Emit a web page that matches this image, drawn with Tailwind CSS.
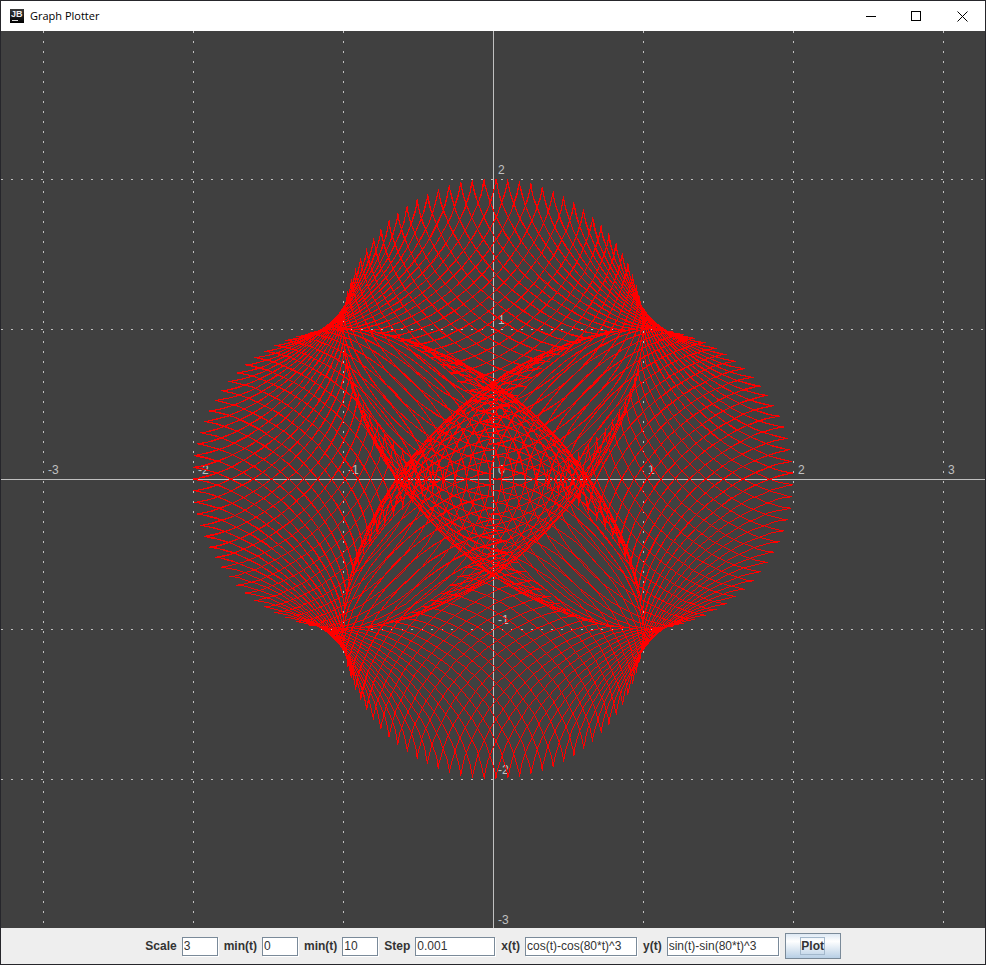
<!DOCTYPE html>
<html lang="en">
<head>
<meta charset="utf-8">
<meta name="viewport" content="width=device-width, initial-scale=1">
<title>Graph Plotter</title>
<script src="https://cdn.jsdelivr.net/npm/@tailwindcss/browser@4"></script>
</head>
<body class="flex h-screen flex-col overflow-hidden border border-[#26262b] bg-[#404040] font-['Liberation_Sans',Arial,sans-serif] text-xs text-[#333333]">
  <header class="flex h-[30px] shrink-0 items-center bg-white pl-[9px] text-black">
    <svg class="mr-1.5 size-[14px]" viewBox="0 0 14 14" aria-hidden="true">
      <defs><linearGradient id="tile" x1="0" y1="0" x2="0" y2="1"><stop offset="0" stop-color="#3a3a3a"/><stop offset="1" stop-color="#000"/></linearGradient></defs>
      <rect width="14" height="14" fill="url(#tile)"/>
      <text x="1" y="8" font-size="9" font-weight="700" fill="#eee">JB</text>
      <rect x="2" y="11" width="6" height="1" fill="#ddd"/>
    </svg>
    <h1 class="font-['Open_Sans','Noto_Sans',sans-serif] text-[11px]">Graph Plotter</h1>
    <div class="ml-auto flex h-full">
      <button type="button" aria-label="Minimize" class="grid w-[43px] place-items-center"><svg class="size-[11px]" viewBox="0 0 11 11" shape-rendering="crispEdges"><path d="M0 5.5h10" stroke="#000"/></svg></button>
      <button type="button" aria-label="Maximize" class="grid w-[46px] place-items-center"><svg class="size-[11px]" viewBox="0 0 11 11" shape-rendering="crispEdges"><path d="M.5 .5h9v9h-9z" fill="none" stroke="#000"/></svg></button>
      <button type="button" aria-label="Close" class="grid w-[46px] place-items-center"><svg class="size-[11px]" viewBox="0 0 11 11"><path d="M.5 .5l10 10M10.5 .5l-10 10" stroke="#000"/></svg></button>
    </div>
  </header>

  <main id="plot" class="relative min-h-0 flex-1 overflow-hidden">
    <svg id="grid" class="absolute inset-0 size-full" shape-rendering="crispEdges" stroke="#c0c0c0"></svg>
    <canvas id="curve" class="absolute inset-0 max-w-none"></canvas>
  </main>

  <form id="controls" class="flex shrink-0 items-center justify-center gap-[5px] bg-[#eeeeee] py-[5px] font-bold">
    <label for="scale">Scale</label>
    <input id="scale" value="3" class="mr-px h-[19px] w-9 border border-[#7a8a99] bg-white px-px font-normal shadow-[1px_1px_0_#fff] outline-none">
    <label for="tmin">min(t)</label>
    <input id="tmin" value="0" class="mr-px h-[19px] w-9 border border-[#7a8a99] bg-white px-px font-normal shadow-[1px_1px_0_#fff] outline-none">
    <label for="tmax">min(t)</label>
    <input id="tmax" value="10" class="mr-px h-[19px] w-9 border border-[#7a8a99] bg-white px-px font-normal shadow-[1px_1px_0_#fff] outline-none">
    <label for="step">Step</label>
    <input id="step" value="0.001" class="mr-px h-[19px] w-20 border border-[#7a8a99] bg-white px-px font-normal shadow-[1px_1px_0_#fff] outline-none">
    <label for="fx">x(t)</label>
    <input id="fx" value="cos(t)-cos(80*t)^3" class="mr-px h-[19px] w-28 border border-[#7a8a99] bg-white px-px font-normal shadow-[1px_1px_0_#fff] outline-none">
    <label for="fy">y(t)</label>
    <input id="fy" value="sin(t)-sin(80*t)^3" class="mr-px h-[19px] w-28 border border-[#7a8a99] bg-white px-px font-normal shadow-[1px_1px_0_#fff] outline-none">
    <button type="submit" class="grid h-[26px] w-14 place-items-center border border-[#7a8a99] bg-linear-to-b from-[#dde8f3] via-white via-30% to-[#b8cfe5]"><span class="border border-[#a3b8cc] leading-4">Plot</span></button>
  </form>

<script>
const plot = document.getElementById('plot');
const grid = document.getElementById('grid');
const canvas = document.getElementById('curve');
const value = id => document.getElementById(id).value;

// Turns an expression in t into a function; ^ is exponentiation.
function compile(source) {
  const body = source.replace(/\^/g, '**').replace(/\b(sin|cos|tan|exp|sqrt|abs|log)\b/g, 'Math.$1');
  return new Function('t', 'return ' + body);
}

function svgNode(name, attrs, text) {
  const node = document.createElementNS('http://www.w3.org/2000/svg', name);
  for (const key in attrs) node.setAttribute(key, attrs[key]);
  if (text !== undefined) node.textContent = text;
  grid.append(node);
}

function drawGrid(w, h, cx, cy, unit) {
  grid.replaceChildren();
  const label = (x, y, n) => svgNode('text', { x, y, fill: '#c0c0c0', stroke: 'none', 'font-size': 12 }, n);
  const nx = Math.floor(cx / unit), ny = Math.ceil(cy / unit);
  for (let n = -nx; n <= nx; n++) {
    const x = cx + n * unit;
    svgNode('path', { d: `M${x + .5} 0V${h}`, 'stroke-dasharray': n ? '2 8' : 'none' });
    label(x + 5, cy - 5, n);
  }
  for (let n = -ny; n <= ny; n++) {
    const y = cy - n * unit;
    svgNode('path', { d: `M0 ${y + .5}H${w}`, 'stroke-dasharray': n ? '2 8' : 'none' });
    if (n && y > 0 && y - 5 < h) label(cx + 5, y - 5, n);
  }
}

function drawCurve(w, h, cx, cy, unit) {
  canvas.width = w;
  canvas.height = h;
  const ctx = canvas.getContext('2d');
  const image = ctx.createImageData(w, h);
  const pixels = new Uint32Array(image.data.buffer);
  const x = compile(value('fx')), y = compile(value('fy'));
  const end = +value('tmax'), step = +value('step');
  // Hard-edged line between two pixels
  function line(x0, y0, x1, y1) {
    const dx = Math.abs(x1 - x0), dy = -Math.abs(y1 - y0);
    const sx = x0 < x1 ? 1 : -1, sy = y0 < y1 ? 1 : -1;
    let err = dx + dy;
    for (;;) {
      if (x0 >= 0 && x0 < w && y0 >= 0 && y0 < h) pixels[y0 * w + x0] = 0xff0000ff;
      if (x0 === x1 && y0 === y1) break;
      const e2 = 2 * err;
      if (e2 >= dy) { err += dy; x0 += sx; }
      if (e2 <= dx) { err += dx; y0 += sy; }
    }
  }
  let px, py;
  for (let t = +value('tmin'); t < end && step > 0; t += step) {
    const qx = Math.floor(cx + x(t) * unit), qy = Math.floor(cy - y(t) * unit);
    if (px !== undefined) line(px, py, qx, qy);
    px = qx;
    py = qy;
  }
  ctx.putImageData(image, 0, 0);
}

function draw() {
  const w = plot.clientWidth, h = plot.clientHeight;
  if (!w || !h) return;
  const cx = Math.floor(w / 2), cy = Math.floor(h / 2);
  const unit = Math.max(1, Math.round(Math.min(w, h) / 2 / (+value('scale') || 3)));
  drawGrid(w, h, cx, cy, unit);
  drawCurve(w, h, cx, cy, unit);
}

document.getElementById('controls').addEventListener('submit', event => {
  event.preventDefault();
  draw();
});
new ResizeObserver(draw).observe(plot);
</script>
</body>
</html>
